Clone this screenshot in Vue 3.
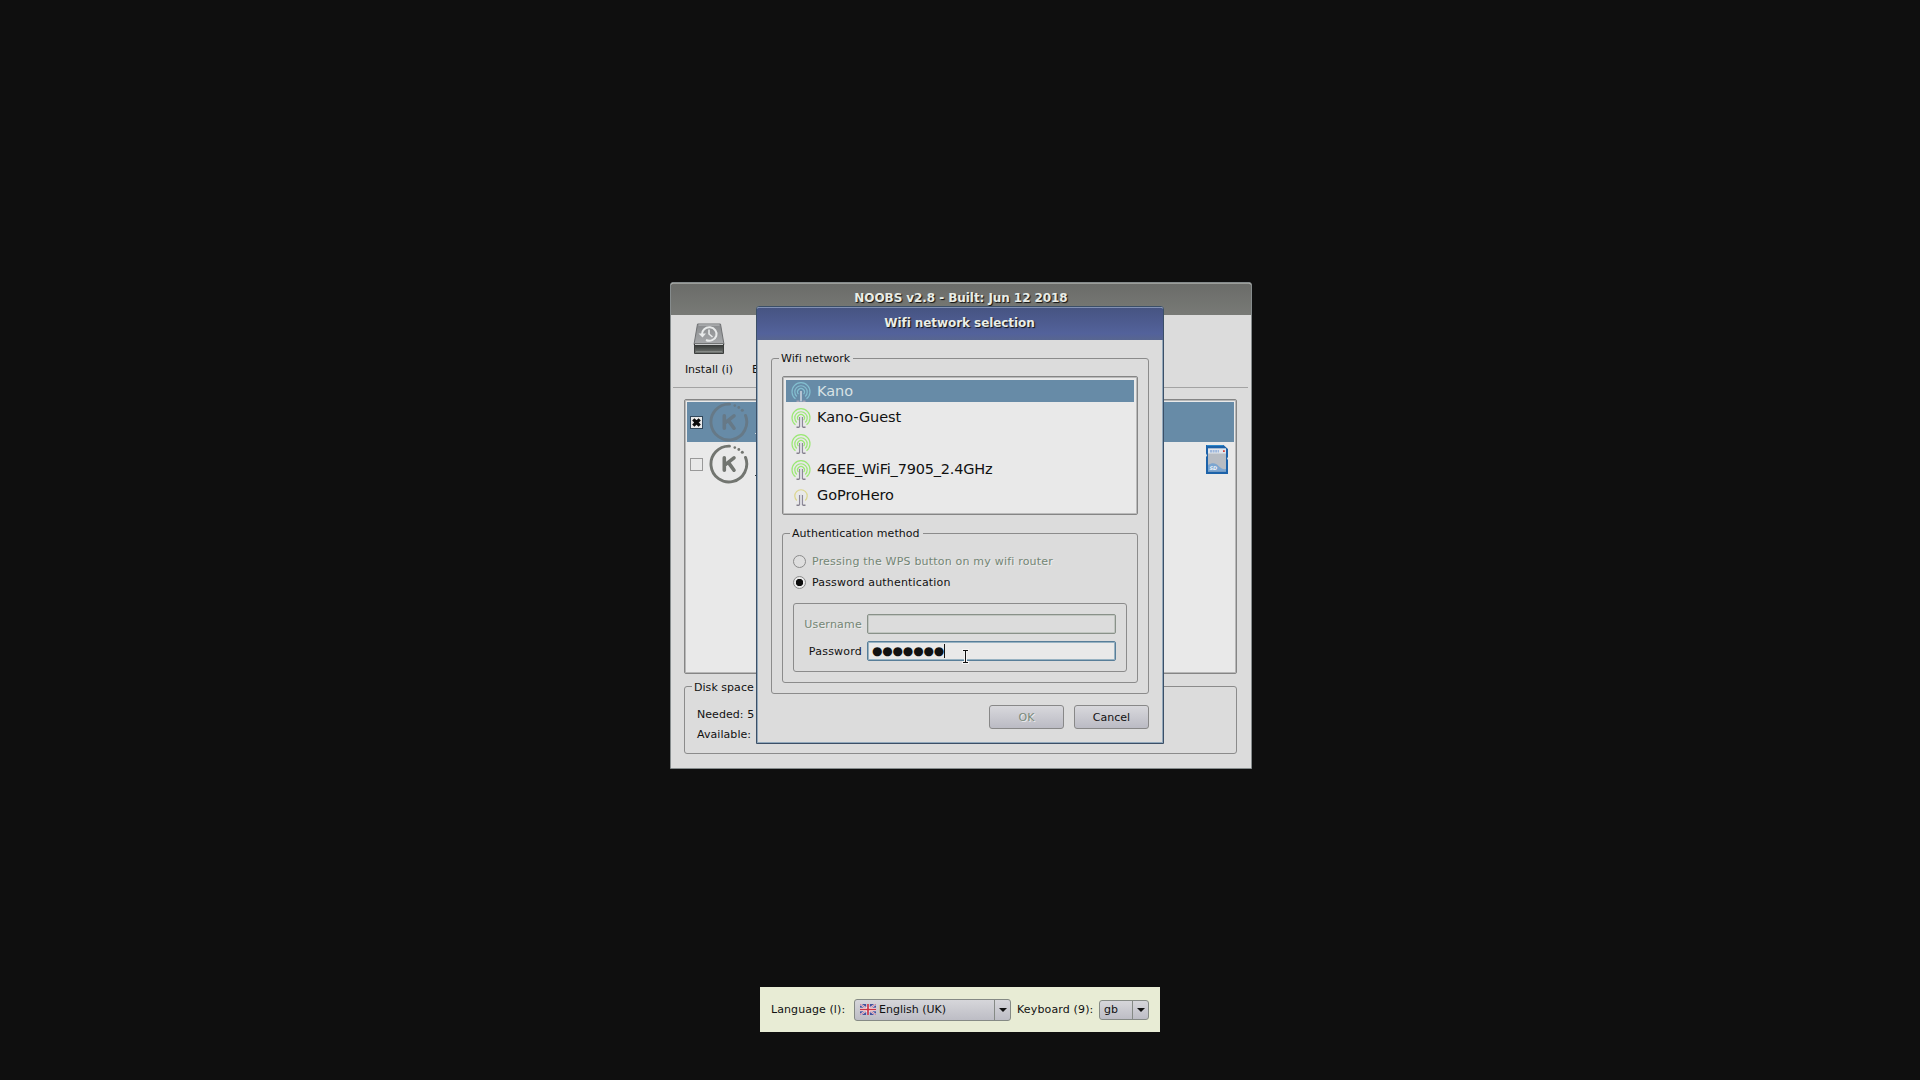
<script setup>
import { ref } from 'vue'

const networks = ref([
  { ssid: 'Kano', signal: 'selected' },
  { ssid: 'Kano-Guest', signal: 'strong' },
  { ssid: '', signal: 'strong' },
  { ssid: '4GEE_WiFi_7905_2.4GHz', signal: 'strong', tight: true },
  { ssid: 'GoProHero', signal: 'weak' },
])
const systems = ref([
  { checked: true, sd: false },
  { checked: false, sd: true },
])
const ringColors = { selected: '#83bfd0', strong: '#9be874', weak: '#dcd68e' }
</script>

<template>
  <div class="desktop">
    <section class="window main">
      <header class="title">NOOBS v2.8 - Built: Jun 12 2018</header>
      <div class="toolbar">
        <div class="tool">
          <svg width="32" height="32" viewBox="0 0 32 32">
            <defs>
              <linearGradient id="top" x1="0" y1="0" x2="0" y2="1">
                <stop offset="0" stop-color="#898b8d" /><stop offset="1" stop-color="#a9abad" />
              </linearGradient>
              <linearGradient id="front" x1="0" y1="0" x2="0" y2="1">
                <stop offset="0" stop-color="#2d302e" /><stop offset="1" stop-color="#777b78" />
              </linearGradient>
            </defs>
            <path d="M4.5 1h23L31 21.500H1z" fill="url(#top)" stroke="#707274" />
            <path d="M5.500 2h21" stroke="#c2c4c5" />
            <path d="M1.500 21h29v9.500h-29z" fill="url(#front)" stroke="#3c3e3d" />
            <path d="M2 21.500h28" stroke="#cacccc" />
            <path d="M3 28.500h26" stroke="#858986" />
            <path d="M9 11.500a7.300 6.700 0 1 1 4 5.500" fill="none" stroke="#e8eaea" stroke-width="2" />
            <path d="M5.500 10.500h7.500l-3.500 4z" fill="#e8eaea" />
            <path d="M16 6.500v4.500l3.500 3" fill="none" stroke="#e8eaea" stroke-width="1.600" />
          </svg>
          <span>Install (i)</span>
        </div>
        <div class="tool next"><span>Edit config (e)</span></div>
      </div>
      <div class="rule"></div>
      <div class="os-list">
        <div v-for="(os, i) in systems" :key="i" class="os" :class="{ chosen: os.checked }">
          <span class="check">
            <svg v-if="os.checked" width="11" height="11" viewBox="0 0 11 11">
              <path d="M2.300 2.300l6.400 6.400M8.700 2.300l-6.400 6.400" stroke="#0c0c0c" stroke-width="3.200" />
            </svg>
          </span>
          <svg class="kano" width="40" height="40" viewBox="0 0 40 40">
            <g fill="none" stroke-width="2.900" stroke-linecap="round">
              <path d="M20.500 2.100A17.900 17.900 0 1 0 36.500 13.400" />
              <path d="M15.300 13.800v12.400M25 13.800l-9 7M19.500 18.600l5.500 7.600" stroke-width="3.600" />
            </g>
            <circle cx="25.800" cy="3.600" r="1.300" /><circle cx="29.800" cy="5.500" r="1.400" />
            <circle cx="33.300" cy="8.300" r="1.500" />
          </svg>
          <i class="speck"></i>
          <svg v-if="os.sd" class="sd" width="24" height="31" viewBox="0 0 24 31">
            <path d="M1 1h17.500L23 5v8l-1 1.500 1 1.500v14H1V13l1-1.500-1-2z" fill="#1c62a9" />
            <path d="M2 1.500h16" stroke="#2c87c9" />
            <path d="M3 4.500h18v23H3z" fill="#b7bcc3" />
            <path d="M3 4.500h18v5H3z" fill="#e1e5ec" />
            <path d="M5 7.200h9" stroke="#9db7dc" stroke-width="2.400" stroke-dasharray="2 .6" />
            <path d="M18 7.200h1.800" stroke="#d0423c" stroke-width="1.800" />
            <path d="M3 21c5-3 8-1.500 10.500 1s4.500 3.500 7.500 3v2.500H3z" fill="#7ba5d0" />
            <text x="4.500" y="25.500">SD</text>
          </svg>
        </div>
      </div>
      <div class="group disk">
        <span class="legend">Disk space</span>
        <div>Needed: 5</div>
        <div>Available:</div>
      </div>
    </section>

    <section class="window dialog">
      <header class="title">Wifi network selection</header>
      <div class="group wifi">
        <span class="legend">Wifi network</span>
        <div class="net-list">
          <div v-for="(n, i) in networks" :key="i" class="net" :class="{ chosen: i === 0, tight: n.tight }">
            <svg width="20" height="22" viewBox="0 0 20 22">
              <g fill="none" :stroke="ringColors[n.signal]" stroke-width="1.200">
                <path v-if="n.signal !== 'weak'" d="M4.500 17.800A9 9 0 1 1 15.500 17.800" />
                <path d="M5.800 15.500A6.200 6.200 0 1 1 14.200 15.500" />
                <path v-if="n.signal !== 'weak'" d="M7.500 13.200A3.400 3.400 0 1 1 12.500 13.200" />
              </g>
              <template v-if="n.signal === 'selected'">
                <path d="M10 10v10.500" stroke="#cbd2de" stroke-width="1.600" />
                <path d="M5.500 20.300h3M11.500 20.300h3" stroke="#a5a3b5" stroke-width="1.600" />
              </template>
              <template v-else>
                <path d="M10 9.500v10.500" stroke="#dedee3" stroke-width="2" />
                <path d="M8.500 10v10M11.500 10v10" stroke="#8d8999" stroke-width="1.100" />
                <path d="M5.500 20.300h3M11.500 20.300h3" stroke="#85818d" stroke-width="1.400" />
              </template>
            </svg>
            <span>{{ n.ssid }}</span>
          </div>
        </div>
        <div class="group auth">
          <span class="legend">Authentication method</span>
          <div class="option off"><i class="radio"></i><span>Pressing the WPS button on my wifi router</span></div>
          <div class="option"><i class="radio on"></i><span>Password authentication</span></div>
          <div class="group creds">
            <div class="field off"><label>Username</label><div class="input"></div></div>
            <div class="field">
              <label>Password</label>
              <div class="input focus"><span class="dots">●●●●●●●</span><i class="caret"></i></div>
            </div>
          </div>
        </div>
      </div>
      <div class="buttons">
        <button class="off">OK</button>
        <button>Cancel</button>
      </div>
      <svg class="ibeam" width="7" height="15" viewBox="0 0 7 15">
        <path d="M0 1h7M0 13.500h7M3.500 1v13" stroke="#f4f4f4" stroke-width="3" />
        <path d="M1 1.500h5M1 13.500h5M3.500 1.500v12" stroke="#111" />
      </svg>
    </section>

    <footer class="locale">
      <span class="lang">Language (l):</span>
      <div class="combo wide">
        <svg width="16" height="11" viewBox="0 0 16 11">
          <path d="M0 0h16v11H0z" fill="#44529c" />
          <path d="M0 0l16 11M16 0L0 11" stroke="#dde" stroke-width="2" />
          <path d="M0 0l16 11M16 0L0 11" stroke="#cf6673" stroke-width=".8" />
          <path d="M8 0v11M0 5.500h16" stroke="#f3eeee" stroke-width="3.400" />
          <path d="M8 0v11M0 5.500h16" stroke="#cb3447" stroke-width="1.700" />
        </svg>
        <span>English (UK)</span>
        <i class="drop"></i>
      </div>
      <span class="kb">Keyboard (9):</span>
      <div class="combo small"><span>gb</span><i class="drop"></i></div>
    </footer>
  </div>
</template>

<style>
body { margin: 0; background: #0f0f0f; }
</style>

<style scoped>
* { box-sizing: border-box; }
.desktop {
  position: relative; width: 1920px; height: 1080px; overflow: hidden; background: #0f0f0f;
  font: 11px/14px "DejaVu Sans", sans-serif; color: #111; white-space: nowrap;
}
svg { display: block; flex: none; }
.window { position: absolute; display: flex; flex-direction: column; background: #dcdcdc; border-radius: 3px 3px 0 0; }
.main { left: 670px; top: 282px; width: 582px; height: 487px; border: 1px solid #858b8c; overflow: hidden; }
.dialog { left: 756px; top: 306px; width: 408px; height: 438px; border: 1px solid #3b4f67; box-shadow: inset 1px 0 #92a8bb, inset -1px -1px #92a8bb; }
.title {
  flex: none; height: 33px; font-size: 12px; line-height: 31px; font-weight: bold; text-align: center; letter-spacing: -.07px;
  color: #e9ede7; text-shadow: 1px 1px 1px #111; background: linear-gradient(#6b6c69, #787a76);
  border-top: 1px solid #9b9d99; border-radius: 2px 2px 0 0;
}
.main .title { height: 32px; line-height: 29px; }
.dialog .title { background: linear-gradient(#465482, #53629b 80%, #586690); border-top-color: #8190b3; line-height: 30px; padding-right: 1px; }
.toolbar { display: flex; height: 72px; flex: none; }
.tool { width: 76px; padding-top: 8px; display: flex; flex-direction: column; align-items: center; gap: 8px; }
.tool.next { padding-top: 48px; align-items: flex-start; margin-left: 5px; }
.rule { height: 1px; margin: 0 3px 0 2px; background: #a3a3a3; flex: none; }
.os-list { height: 275px; margin: 11px 14px 0 13px; border: 1px solid #858585; border-radius: 2px; box-shadow: inset 0 0 0 1px #b7b7b7; padding: 2px; background: #e9e9e9; flex: none; }
.os { display: flex; align-items: center; height: 44px; padding-left: 3px; }
.os.chosen { height: 40px; background: #678ba7; }
.check { width: 13px; height: 13px; border: 1px solid #999; background: #e9e9e9; display: flex; align-items: center; justify-content: center; }
.chosen .check { border-color: #30475b; }
.kano { margin: 0 0 0 6px; stroke: #727570; fill: #727570; }
.kano circle { stroke: none; }
.chosen .kano { stroke: #667987; fill: #667987; }
.speck { width: 2px; height: 1px; margin: 23px 0 0 6px; background: #33383c; }
.chosen .speck { background: #d5dcde; }
.sd { margin: -9px 5px 0 auto; }
.sd text { font: italic bold 5px "DejaVu Sans", sans-serif; fill: #eef3f8; }
.group { position: relative; border: 1px solid #8b8b8b; border-radius: 3px; }
.legend { position: absolute; left: 7px; top: -7px; padding: 0 3px 0 2px; background: #dcdcdc; letter-spacing: .04px; }
.disk { height: 68px; margin: 12px 14px 0 13px; padding: 18px 12px; line-height: 20px; letter-spacing: .06px; flex: none; }
.disk .legend { line-height: 14px; top: -6px; }
.wifi { height: 336px; margin: 18px 14px 0; padding: 17px 10px 0; flex: none; }
.net-list { height: 139px; border: 1px solid #858585; border-radius: 2px; box-shadow: inset 0 0 0 1px #bababa; background: #e9e9e9; padding: 3px 3px 0; display: flex; flex-direction: column; gap: 4px; }
.net { display: flex; align-items: center; height: 22px; padding-left: 4.500px; gap: 6.500px; font-size: 14.500px; line-height: 22px; letter-spacing: -.06px; }
.net.tight { letter-spacing: -.2px; }
.net svg { margin-top: 1px; }
.net.chosen { background: #678ba7; color: #d8e2e4; }
.auth { height: 150px; margin-top: 18px; padding: 20px 10px 0; }
.option { display: flex; align-items: center; height: 14px; gap: 6px; margin-bottom: 7px; letter-spacing: .16px; }
.option span { position: relative; top: 1px; }
.option.off { letter-spacing: .2px; }
.off { color: #748675; }
.option.off, .off label { text-shadow: 1px 1px #ececec; }
.radio { width: 13px; height: 13px; border: 1px solid #8b8b8b; border-radius: 50%; background: #dedede; }
.radio.on { background: radial-gradient(circle, #0d0d0d 3.400px, #e9e9e9 4px); }
.creds { height: 69px; margin-top: 14px; padding: 10px 10px 0; }
.field { display: flex; align-items: center; height: 20px; margin-bottom: 7px; }
.field label { width: 59px; margin-right: 4px; padding-top: 1px; text-align: right; letter-spacing: .22px; position: relative; left: -1px; }
.input { flex: 1; height: 20px; border: 1px solid #899189; border-radius: 2px; box-shadow: inset 0 0 0 1px #c1c6c1; display: flex; align-items: center; padding-left: 4px; }
.input.focus { border-color: #587e99; box-shadow: inset 0 0 0 1px #97b2c2; background: #e9e9e9; }
.dots { font-size: 12px; line-height: 18px; letter-spacing: -.180px; }
.caret { width: 1px; height: 14px; background: #111; }
.buttons { display: flex; justify-content: flex-end; gap: 10px; margin: 11px 14px 0; }
button { width: 75px; height: 24px; padding: 1px 0 0; border: 1px solid #888; border-radius: 3px; background: linear-gradient(#d8d8dc, #bbbbc4); font: inherit; color: #111; }
button.off { color: #7a8a7b; text-shadow: 1px 1px #ececec; }
.ibeam { position: absolute; left: 205px; top: 342px; }
.locale { position: absolute; left: 760px; top: 987px; width: 400px; height: 45px; padding-left: 11px; display: flex; align-items: center; background: #e8ecd5; }
.lang { width: 83px; letter-spacing: .08px; }
.kb { width: 82px; margin-left: 6px; letter-spacing: .15px; }
.combo { display: flex; align-items: center; border: 1px solid #858a85; border-radius: 3px; background: linear-gradient(#d6d6da, #bdbdc5); }
.wide { width: 157px; height: 22px; padding-left: 5px; gap: 3px; }
.small { width: 50px; height: 20px; padding-left: 4px; }
.drop { align-self: stretch; width: 16px; margin-left: auto; border-left: 1px solid #858a85; display: flex; align-items: center; justify-content: center; }
.drop::after { content: ""; border: 4px solid transparent; border-top: 4px solid #111; border-bottom: 0; }
</style>
